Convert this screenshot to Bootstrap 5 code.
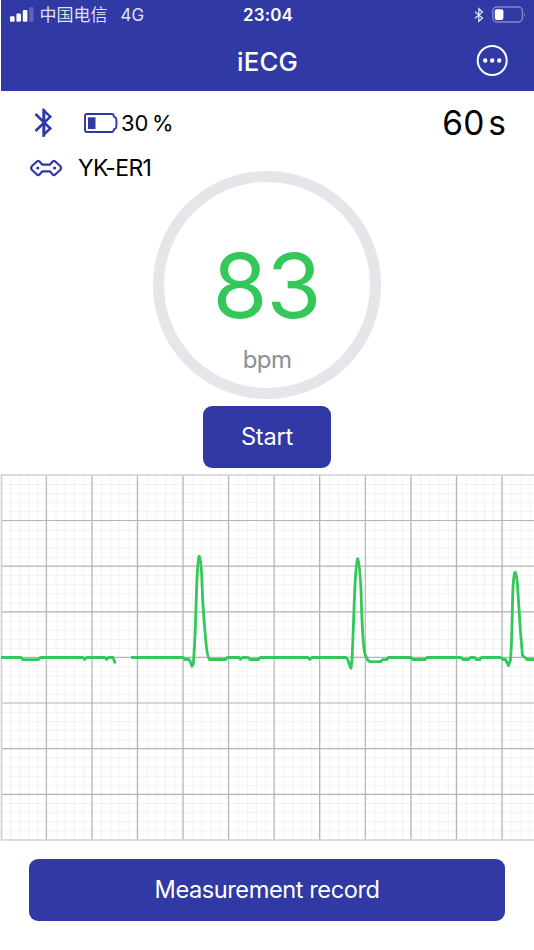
<!DOCTYPE html>
<html lang="en">
<head>
<meta charset="utf-8">
<meta name="viewport" content="width=device-width, initial-scale=1">
<title>iECG</title>
<link href="https://cdn.jsdelivr.net/npm/bootstrap@5.3.0/dist/css/bootstrap.min.css" rel="stylesheet">
<style>
:root{--brand:#3039a4;--pulse:#34c759}
body{font-family:Inter,"Noto Sans CJK SC",sans-serif;color:#000;line-height:1;overflow-x:hidden}
svg{display:block;flex:none}
.app{width:534px;height:950px;overflow:hidden}
.app-head{background:var(--brand);height:91.4px;margin-left:1px}
.three{display:grid;grid-template-columns:1fr auto 1fr;align-items:center}
.status{height:30px;padding:0 8px 0 9px;font-size:17px}
.carrier{font-size:17px;margin-left:5.5px;color:#dfe1f2}
.net{font-size:17px;margin-left:13px;color:#dfe1f2}
.clock{font-size:17px;font-weight:600;letter-spacing:.1px}
.titlebar{height:61px;padding:0 26px 0 26px}
.titlebar h1{font-size:25.8px;font-weight:500;line-height:1;letter-spacing:.2px;padding-top:2px}
.vitals{height:314.6px;grid-template-columns:153.4px 227.4px 153.2px;align-items:start}
.device{padding-left:29px;white-space:nowrap;padding-top:16px}
.line1{height:32px}
.line2{height:32px;margin-top:13px}
.pct{font-size:22px;padding-left:1px;letter-spacing:-.2px}
.name{font-size:23px;letter-spacing:-.65px;margin-left:15px;padding-top:1px}
.timer{font-size:33.5px;padding:15.5px 28px 0 0}
.dial{width:227.4px;height:227.4px;margin-top:79.9px;border:11.7px solid #e5e5ea;border-radius:50%}
.rate{font-size:89px;color:var(--pulse);line-height:90px;letter-spacing:-1px;margin:59px 1px 0 0}
.unit{font-size:24px;color:#8e8e93;margin-top:16.5px;letter-spacing:-.6px}
.btn-brand,.btn-brand:hover{background:var(--brand);color:#fff;border:0;border-radius:9px;font-size:23.6px;line-height:1;letter-spacing:-.43px}
.start{width:128px;height:62.5px;letter-spacing:-.2px}
.record{width:476px;height:62.5px;margin-top:18px}
.chart{margin-top:5.5px}
</style>
<script src="https://cdn.jsdelivr.net/npm/bootstrap@5.3.0/dist/js/bootstrap.bundle.min.js"></script>
</head>
<body class="bg-white">
<div class="app d-flex flex-column">
  <header class="app-head text-white">
    <div class="status three">
      <div class="d-flex align-items-center">
        <svg width="24" height="16" viewBox="0 -1 24 16" fill="#fff"><rect x="0" y="8.3" width="4.6" height="5.4" rx="1.2"/><rect x="6.4" y="5.5" width="4.6" height="8.2" rx="1.2"/><rect x="12.8" y="1.9" width="4.6" height="11.8" rx="1.2"/><rect x="19.2" y="-1" width="4.4" height="14.7" rx="1.2" opacity=".22"/></svg>
        <span class="carrier">中国电信</span><span class="net">4G</span>
      </div>
      <span class="clock">23:04</span>
      <div class="d-flex align-items-center justify-content-end">
        <svg width="10" height="16" fill="none" stroke="#e6e8f6" stroke-width="1.2"><path d="M1 4.7 8.5 11 4.8 14.3V1.7L8.5 5 1 11.3"/></svg>
        <svg class="ms-2" width="34" height="18"><rect x=".8" y="1" width="29.6" height="15" rx="4" fill="none" stroke="#8388c8" stroke-width="1.4"/><rect x="2.8" y="3.3" width="8.6" height="10.6" rx="2" fill="#fff"/><path d="M32.2 6.2q1.6 2.3 0 4.6z" fill="#8388c8"/></svg>
      </div>
    </div>
    <div class="titlebar three">
      <span></span>
      <h1 class="m-0">iECG</h1>
      <div class="d-flex justify-content-end">
        <svg width="32" height="32"><circle cx="16.2" cy="15.5" r="14.5" fill="none" stroke="#fff" stroke-width="2"/><g fill="#fff"><circle cx="9.2" cy="15.5" r="2.2"/><circle cx="16.2" cy="15.5" r="2.2"/><circle cx="23.2" cy="15.5" r="2.2"/></g></svg>
      </div>
    </div>
  </header>

  <main>
    <section class="vitals three">
      <div class="device">
        <div class="line1 d-flex align-items-center">
          <svg width="30" height="30" fill="none" stroke="#3039a4" stroke-width="2.5"><path d="M6.5 6 21.3 20.5 15 26.3V2.7l6.3 6L6.5 23"/><path d="M14.8 1v27.7" stroke-width="2.8"/></svg>
          <svg width="37" height="22" class="ms-4" fill="none" stroke="#3039a4" stroke-width="1.9"><path d="M4 2h25q1.7 0 1.9 2.600l2 1.200q.6 1.300.6 5.200t-.6 5.200l-2 1.200Q30.700 20 29 20H4Q2 20 2 18V4Q2 2 4 2z"/><rect x="5" y="5.300" width="7.500" height="11.700" fill="#3039a4" stroke="none"/></svg>
          <span class="pct">30<span class="ms-1">%</span></span>
        </div>
        <div class="line2 d-flex align-items-center">
          <svg width="34" height="18" fill="none" stroke="#3039a4" stroke-width="2.2" stroke-linejoin="round"><path d="M2 9 3 7 8.3 2.2Q9.3 1.5 10.3 2.3L13.4 5.7H20.8L23.9 2.3Q24.9 1.5 25.9 2.2L31.2 7 32.2 9 31.2 11 25.9 15.8Q24.9 16.5 23.9 15.7L20.8 12.3H13.4L10.3 15.7Q9.3 16.5 8.3 15.8L3 11z"/><g fill="#3039a4" stroke="none"><circle cx="8.8" cy="9" r="1.6"/><circle cx="25.6" cy="9" r="1.6"/></g></svg>
          <span class="name">YK-ER1</span>
        </div>
      </div>
      <div class="dial d-flex flex-column align-items-center">
        <div class="rate">83</div>
        <div class="unit">bpm</div>
      </div>
      <div class="timer text-end">60<span class="ms-1">s</span></div>
    </section>

    <div class="d-flex justify-content-center">
      <button class="btn btn-brand start p-0" type="button">Start</button>
    </div>

    <svg class="chart" width="534" height="367" viewBox="0 474 534 367">
      <defs>
        <pattern id="fine" x=".9" y="474.9" width="9.115" height="9.115" patternUnits="userSpaceOnUse"><path d="M0 .5H9.2M.5 0V9.2" stroke="#f1f1f1" stroke-width="1"/></pattern>
      </defs>
      <rect x="1" y="475" width="533" height="365" fill="url(#fine)"/>
      <path stroke="#b5b5b5" stroke-width="1.2" d="M46.3 475V840M91.9 475V840M137.4 475V840M183 475V840M228.5 475V840M274.1 475V840M319.6 475V840M365.3 475V840M410.9 475V840M456.4 475V840M502 475V840M1 520.5H534M1 566.2H534M1 611.8H534M1 657.4H534M1 703H534M1 748.6H534M1 794.3H534"/>
      <path stroke="#d2d2d2" stroke-width="1.7" d="M1 475H534M1 840H534M1.5 475V840"/>
      <g fill="none" stroke="#34c759" stroke-width="2.8" stroke-linejoin="round">
        <path d="M1 657.5H21L23 659.7H38L40.5 657.5H83L84.5 659.5 86.5 657.5H105L106.5 659.5 108.500 657.5H113L115.3 663.5"/>
        <path d="M131 657.5H183L185 659.5H189L190.5 662 192 666.2 193.3 664C195.5 640 196 600 197 578Q198.3 556 199.3 556.3Q201 557 202 582C202.5 606 204 620 206 643Q207.5 658 209.5 659.5H225.5L227.5 657.5H239L240.5 659.3 242.5 657.5H248L250 659.5H258.5L260.5 657.5H308L309.5 659.5 312 657.5H346L348 660 350 666.5 351 668.3 352 660C353.5 630 354 600 355.5 576Q357 558.5 357.9 558.7Q359.3 559 361 590C361.8 620 362.5 645 365 654Q367 660 369.5 661.7H380.5L382.5 659.7H386.5L388.5 657.5H411L413 659.5H425L427 657.5H461L463 659.5H468.5L470.5 657.5H474.5L476.5 659.7H479.5L481.5 657.5H500.5L503 659.5H505.5L508.5 665.5 510.5 660C512.3 635 512 610 513 588Q514 571.5 515.3 572.3Q516.8 572.5 517.8 590L520.5 632 522.5 655.5 525 657.5 527 659.5H534"/>
      </g>
    </svg>

    <div class="d-flex justify-content-center">
      <button class="btn btn-brand record p-0" type="button">Measurement record</button>
    </div>
  </main>
</div>
</body>
</html>
